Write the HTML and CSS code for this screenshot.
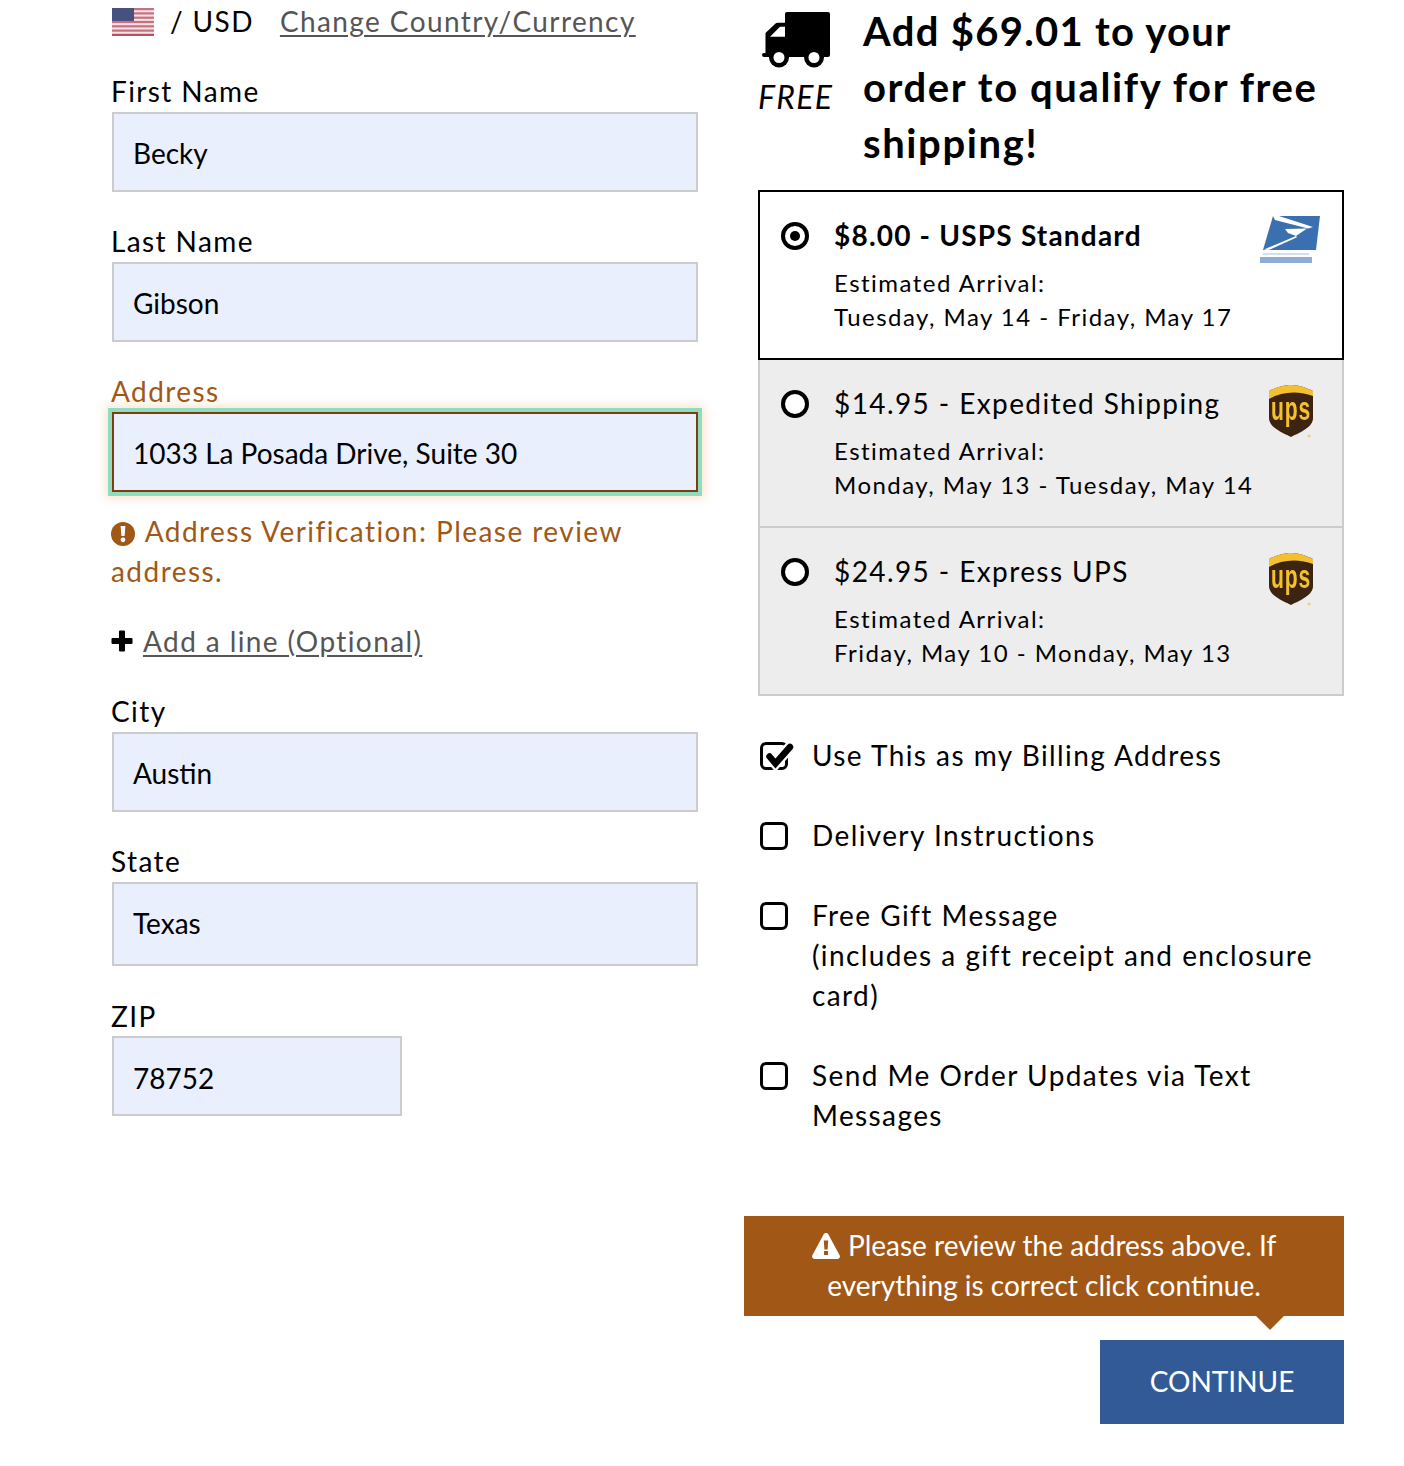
FILE: index.html
```html
<!DOCTYPE html>
<html lang="en">
<head>
<meta charset="utf-8">
<title>Checkout</title>
<link rel="stylesheet" href="styles.css">
</head>
<body>
<main class="page">
  <section class="col-left">
    <div class="locale">
      <svg class="flag" viewBox="0 0 42 28" aria-hidden="true">
        <rect width="42" height="28" fill="#f2e4e6"/>
        <rect y="0" width="42" height="2.2" fill="#c7707f"/>
        <rect y="4.3" width="42" height="2.2" fill="#c7707f"/>
        <rect y="8.6" width="42" height="2.2" fill="#c7707f"/>
        <rect y="12.9" width="42" height="2.2" fill="#c7707f"/>
        <rect y="17.2" width="42" height="2.2" fill="#c7707f"/>
        <rect y="21.5" width="42" height="2.2" fill="#c7707f"/>
        <rect y="25.8" width="42" height="2.2" fill="#b9505f"/>
        <rect width="22" height="13" fill="#47507f"/>
      </svg>
      <span class="currency">/ USD</span>
      <a class="link" href="#">Change Country/Currency</a>
    </div>

    <div class="group">
      <label class="label">First Name</label>
      <div class="field">Becky</div>
    </div>
    <div class="group">
      <label class="label">Last Name</label>
      <div class="field">Gibson</div>
    </div>
    <div class="group">
      <label class="label label-warn">Address</label>
      <div class="field field-warn">1033 La Posada Drive, Suite 30</div>
    </div>
    <p class="verify">
      <svg class="verify-icon" viewBox="0 0 24 24" aria-hidden="true">
        <circle cx="12" cy="12" r="12" fill="#a15816"/>
        <path d="M9.600 4h4.800l-.8 10h-3.200z" fill="#fff"/>
        <circle cx="12" cy="17.800" r="2.400" fill="#fff"/>
      </svg>
      Address Verification: Please review address.
    </p>
    <div class="add-line">
      <svg class="plus" viewBox="0 0 22 22" aria-hidden="true">
        <path d="M8 1.500a1 1 0 0 1 1-1h4a1 1 0 0 1 1 1V8h6.500a1 1 0 0 1 1 1v4a1 1 0 0 1-1 1H14v6.500a1 1 0 0 1-1 1H9a1 1 0 0 1-1-1V14H1.500a1 1 0 0 1-1-1V9a1 1 0 0 1 1-1H8z" fill="#000"/>
      </svg>
      <a class="link" href="#">Add a line (Optional)</a>
    </div>
    <div class="group group-city">
      <label class="label">City</label>
      <div class="field">Austin</div>
    </div>
    <div class="group">
      <label class="label">State</label>
      <div class="field field-state">Texas</div>
    </div>
    <div class="group">
      <label class="label label-zip">ZIP</label>
      <div class="field field-zip">78752</div>
    </div>
  </section>

  <section class="col-right">
    <header class="promo">
      <div class="promo-badge">
        <svg class="truck" viewBox="0 0 70 58" aria-hidden="true">
          <path d="M23 3a2 2 0 0 1 2-2h41a2 2 0 0 1 2 2v41a2 2 0 0 1-2 2H23z" fill="#000"/>
          <path d="M3.500 22 13 13a4 4 0 0 1 3-1.300h8V46H2a2 2 0 0 1 0-4h1.500z" fill="#000"/>
          <path d="M8 25.700 18 15.700h5v10H8z" fill="#fff"/>
          <circle cx="17" cy="46.500" r="10" fill="#000"/>
          <circle cx="17" cy="46.500" r="5.500" fill="#fff"/>
          <circle cx="52" cy="46.500" r="10" fill="#000"/>
          <circle cx="52" cy="46.500" r="5.500" fill="#fff"/>
        </svg>
        <span class="free">FREE</span>
      </div>
      <h2 class="promo-title">Add $69.01 to your order to qualify for free shipping!</h2>
    </header>

    <div class="options">
      <div class="option option-selected">
        <span class="radio radio-on"></span>
        <div class="option-text">
          <div class="option-title option-title-bold">$8.00 - USPS Standard</div>
          <div class="option-eta">Estimated Arrival:</div>
          <div class="option-eta">Tuesday, May 14 - Friday, May 17</div>
        </div>
        <svg class="carrier carrier-usps" viewBox="0 0 60 48" aria-hidden="true">
          <path d="M13 0h47l-4 34H3z" fill="#3a70b0"/>
          <path d="M13 0h6l34 11-5 1.500L15 4z" fill="#fff"/>
          <path d="M25 13l22-.5-11 7.500-8-3z" fill="#fff"/>
          <path d="M4 33.500 36 20l1 1.200L9 34z" fill="#fff"/>
          <rect x="3" y="37" width="46" height="2" fill="#d5e0ee"/>
          <rect x="0" y="41" width="52" height="6" fill="#8fadd3"/>
        </svg>
      </div>
      <div class="option">
        <span class="radio"></span>
        <div class="option-text">
          <div class="option-title">$14.95 - Expedited Shipping</div>
          <div class="option-eta">Estimated Arrival:</div>
          <div class="option-eta">Monday, May 13 - Tuesday, May 14</div>
        </div>
        <svg class="carrier carrier-ups" viewBox="0 0 44 54" aria-hidden="true">
          <path d="M0 6C8 2 16 0 22 0s14 2 22 6v27c0 9-12 14-22 19C12 47 0 42 0 33z" fill="#3d2311"/>
          <path d="M0 6C8 2 16 0 22 0s14 2 22 6v5C30 6 14 6 0 14z" fill="#f4c02f"/>
          <text class="ups-text" transform="translate(22 35) scale(.62 1)">ups</text>
          <circle cx="40" cy="51" r="1.500" fill="#f4cf70"/>
        </svg>
      </div>
      <div class="option">
        <span class="radio"></span>
        <div class="option-text">
          <div class="option-title">$24.95 - Express UPS</div>
          <div class="option-eta">Estimated Arrival:</div>
          <div class="option-eta">Friday, May 10 - Monday, May 13</div>
        </div>
        <svg class="carrier carrier-ups" viewBox="0 0 44 54" aria-hidden="true">
          <path d="M0 6C8 2 16 0 22 0s14 2 22 6v27c0 9-12 14-22 19C12 47 0 42 0 33z" fill="#3d2311"/>
          <path d="M0 6C8 2 16 0 22 0s14 2 22 6v5C30 6 14 6 0 14z" fill="#f4c02f"/>
          <text class="ups-text" transform="translate(22 35) scale(.62 1)">ups</text>
          <circle cx="40" cy="51" r="1.500" fill="#f4cf70"/>
        </svg>
      </div>
    </div>

    <ul class="checks">
      <li class="check">
        <span class="box">
          <svg class="tick" viewBox="0 0 36 32" aria-hidden="true">
            <path d="M9.500 14.500l6 7L30 5" fill="none" stroke="#fff" stroke-width="11" stroke-linecap="round"/>
            <path d="M9.500 14.500l6 7L30 5" fill="none" stroke="#000" stroke-width="6.500" stroke-linecap="round"/>
          </svg>
        </span>
        <span>Use This as my Billing Address</span>
      </li>
      <li class="check"><span class="box"></span><span>Delivery Instructions</span></li>
      <li class="check"><span class="box"></span><span>Free Gift Message<br>(includes a gift receipt and enclosure card)</span></li>
      <li class="check"><span class="box"></span><span>Send Me Order Updates via Text Messages</span></li>
    </ul>

    <div class="notice">
      <svg class="warn-icon" viewBox="0 0 28 26" aria-hidden="true">
        <path d="M14 0c1 0 1.800.5 2.300 1.300l11.300 21c.9 1.700-.3 3.700-2.300 3.700H2.700c-2 0-3.200-2-2.300-3.700l11.300-21C12.200.5 13 0 14 0z" fill="#fff"/>
        <path d="M11.800 7.500h4.400l-.6 9h-3.200z" fill="#a15816"/>
        <rect x="12" y="18" width="4" height="4" fill="#a15816"/>
      </svg>
      Please review the address above. If everything is correct click continue.
    </div>
    <div class="actions">
      <a class="continue" href="#">CONTINUE</a>
    </div>
  </section>
</main>
</body>
</html>
```

FILE: styles.css
```css
* { box-sizing: border-box; }
html, body { margin: 0; padding: 0; background: #fff; }
body {
  font-family: Lato, "Open Sans", sans-serif;
  font-size: 28px;
  line-height: 40px;
  color: #000;
}
.page {
  display: grid;
  grid-template-columns: 588px 586px;
  column-gap: 59px;
  padding: 2px 60px 42px 111px;
  align-items: start;
}
.link { color: #555; text-decoration: underline; letter-spacing: 1.4px; text-underline-offset: 3px; }

.locale { display: flex; align-items: flex-start; height: 40px; line-height: 38px; letter-spacing: 1.4px; }
.flag { width: 42px; height: 28px; margin: 6px 16px 0 1px; filter: blur(.5px); }
.currency { margin-right: 26px; }

.group { margin-top: 30px; }
.label { display: block; height: 40px; line-height: 38px; letter-spacing: 1.4px; }
.label-warn { color: #a15816; }
.label-zip { line-height: 40px; }
.field {
  margin-left: 1px;
  width: 586px;
  height: 80px;
  padding: 19px 19px 0;
  background: #e9effd;
  border: 2px solid #ccc;
  color: #000;
}
.field-warn {
  border-color: #7a3f0d;
  outline: 4px solid #90dcbf;
  box-shadow: 0 0 0 4px #90dcbf, 0 0 10px 6px rgba(240, 190, 140, .45);
}
.field-state { height: 84px; }
.field-zip { width: 290px; padding-top: 20px; }

.verify { margin: 19px 0 0; color: #a15816; letter-spacing: 1.45px; }
.verify-icon { width: 24px; height: 24px; vertical-align: -4px; margin-right: 2px; }
.add-line { display: flex; align-items: center; gap: 10px; margin-top: 30px; }
.plus { width: 22px; height: 22px; }
.group-city { margin-top: 31px; }

.promo { display: flex; align-items: flex-start; height: 188px; }
.promo-badge { width: 105px; display: flex; flex-direction: column; }
.truck { width: 70px; height: 58px; margin: 9px 0 0 4px; }
.free { font-size: 32px; font-style: italic; line-height: 40px; margin: 8px 0 0; letter-spacing: 1.3px; }
.promo-title {
  margin: 0;
  width: 470px;
  font-size: 40px;
  line-height: 56px;
  font-weight: 700;
  letter-spacing: 1.6px;
  position: relative;
  top: 1px;
}
.promo-title::first-line { letter-spacing: 1.3px; }

.options { display: flex; flex-direction: column; }
.option {
  display: flex;
  align-items: flex-start;
  height: 168px;
  padding: 22px 20px 0 21px;
  background: #ededed;
  border: 2px solid #ccc;
  border-top: 0;
  letter-spacing: 1.4px;
}
.option-selected { height: 170px; padding-top: 22px; background: #fff; border: 2px solid #000; }
.radio {
  flex: none;
  width: 28px;
  height: 28px;
  margin-top: 8px;
  border: 4px solid #000;
  border-radius: 50%;
  background: #fff;
  display: flex;
  align-items: center;
  justify-content: center;
}
.radio-on::after { content: ""; width: 10px; height: 10px; border-radius: 50%; background: #000; }
.option-text { flex: 1; margin-left: 25px; }
.option-title { height: 44px; line-height: 42px; }
.option-title-bold { font-weight: 700; letter-spacing: 1.2px; }
.option-eta { font-size: 24px; line-height: 34px; letter-spacing: 1.47px; }
.option-title + .option-eta { margin-top: 8px; }
.carrier { flex: none; }
.carrier-usps { width: 60px; height: 48px; margin: 2px 2px 0 -2px; filter: blur(.7px); }
.carrier-ups { width: 44px; height: 54px; margin: 3px 9px 0 0; filter: blur(.3px); }
.ups-text { font: 700 34px "Liberation Sans", Lato, sans-serif; fill: #f4c02f; text-anchor: middle; }

.checks { list-style: none; margin: 39px 0 0; padding: 0; letter-spacing: 1.38px; word-spacing: .3px; }
.check { display: flex; align-items: flex-start; margin-bottom: 40px; }
.box {
  flex: none;
  position: relative;
  width: 28px;
  height: 28px;
  margin: 7px 24px 0 2px;
  border: 3px solid #000;
  border-radius: 6px;
}
.tick { position: absolute; left: -3px; top: -3px; width: 36px; height: 32px; }

.notice {
  margin: 81px 0 0 -14px;
  position: relative;
  width: 600px;
  padding: 9px 40px 11px;
  background: #a15816;
  color: #fff;
  text-align: center;
}
.notice::after {
  content: "";
  position: absolute;
  right: 60px;
  bottom: -14px;
  border-top: 14px solid #a15816;
  border-left: 14px solid transparent;
  border-right: 14px solid transparent;
}
.warn-icon { width: 28px; height: 26px; vertical-align: -3px; margin-right: 1px; }
.actions { display: flex; justify-content: flex-end; margin-top: 24px; }
.continue {
  display: block;
  width: 244px;
  height: 84px;
  line-height: 82px;
  text-align: center;
  background: #325a96;
  color: #fff;
  text-decoration: none;
}
```
